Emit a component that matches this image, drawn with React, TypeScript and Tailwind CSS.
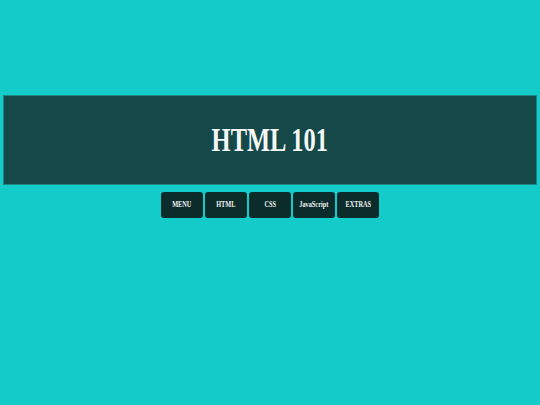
import React from "react";

const items = ["MENU", "HTML", "CSS", "JavaScript", "EXTRAS"];

export default function App() {
  return (
    <div className="min-h-screen w-full bg-[#13cbc8] pt-[95px] px-[3px]" style={{ fontFamily: '"Liberation Serif", serif' }}>
      <div className="h-[90px] w-full bg-[#154848] border border-[#1f8584] flex items-center justify-center">
        <h1 className="text-[34px] leading-none font-bold text-[#f4f7f6] scale-x-[0.72] whitespace-nowrap">HTML 101</h1>
      </div>
      <nav className="mt-[7px] flex justify-center gap-[2px]">
        {items.map((t) => (
          <div key={t} className="w-[42px] h-[26px] rounded-[3px] bg-[#0c2b2b] flex items-center justify-center">
            <span className="text-[9px] font-bold text-[#eef2f1] scale-x-[0.7] whitespace-nowrap">{t}</span>
          </div>
        ))}
      </nav>
    </div>
  );
}
